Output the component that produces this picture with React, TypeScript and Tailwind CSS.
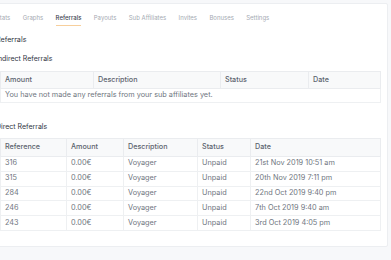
const tabs = ['Stats', 'Graphs', 'Referrals', 'Payouts', 'Sub Affiliates', 'Invites', 'Bonuses', 'Settings'];

interface Referral {
  reference: string;
  amount: string;
  description: string;
  status: string;
  date: string;
}

const direct: Referral[] = [
  { reference: '316', amount: '0.00€', description: 'Voyager', status: 'Unpaid', date: '21st Nov 2019 10:51 am' },
  { reference: '315', amount: '0.00€', description: 'Voyager', status: 'Unpaid', date: '20th Nov 2019 7:11 pm' },
  { reference: '284', amount: '0.00€', description: 'Voyager', status: 'Unpaid', date: '22nd Oct 2019 9:40 pm' },
  { reference: '246', amount: '0.00€', description: 'Voyager', status: 'Unpaid', date: '7th Oct 2019 9:40 am' },
  { reference: '243', amount: '0.00€', description: 'Voyager', status: 'Unpaid', date: '3rd Oct 2019 4:05 pm' },
];

const th = 'border border-[#eaecef] px-[4px] py-0 text-left text-[7.2px] font-medium text-[#5c636e]';
const td = 'border border-[#eef0f2] px-[4px] py-0 text-[7.3px] text-[#6f7680]';

export default function App() {
  return (
    <div className="h-[260px] w-[391px] overflow-hidden bg-[#f7f8fa] pt-[3px]" style={{ fontFamily: 'Inter, "Liberation Sans", sans-serif' }}>
      <div className="-ml-[12px] h-[244px] w-[400px] rounded-[2px] border border-[#eceef1] bg-white pl-[7px]">
        {/* tabs */}
        <div className="flex gap-[12.4px] pt-[10px] text-[6px] leading-[8px] text-[#a5aab2]">
          {tabs.map((t) => (
            <div key={t} className={t === 'Referrals' ? 'border-b-[1.5px] border-[#f7cf9c] pb-[3px] font-medium text-[#3d4350]' : 'pb-[3px]'}>
              {t}
            </div>
          ))}
        </div>

        <div className="mt-[9px] text-[7.2px] leading-[10px] text-[#2f3542]">Referrals</div>
        <div className="mt-[9px] text-[7px] leading-[10px] text-[#2f3542]">Indirect Referrals</div>

        <table className="ml-[4px] mt-[7px] w-[381px] border-collapse">
          <thead>
            <tr className="h-[17px] bg-[#f8f9fa]">
              <th className={`${th} w-[93px]`}>Amount</th>
              <th className={`${th} w-[127px]`}>Description</th>
              <th className={`${th} w-[88px]`}>Status</th>
              <th className={th}>Date</th>
            </tr>
          </thead>
          <tbody>
            <tr className="h-[14px]">
              <td colSpan={4} className={td}>You have not made any referrals from your sub affiliates yet.</td>
            </tr>
          </tbody>
        </table>

        <div className="mt-[19px] text-[7px] leading-[10px] text-[#2f3542]">Direct Referrals</div>

        <table className="ml-[4px] mt-[6px] w-[381px] border-collapse">
          <thead>
            <tr className="h-[18px] bg-[#f8f9fa]">
              <th className={`${th} w-[66px]`}>Reference</th>
              <th className={`${th} w-[57px]`}>Amount</th>
              <th className={`${th} w-[74px]`}>Description</th>
              <th className={`${th} w-[53px]`}>Status</th>
              <th className={th}>Date</th>
            </tr>
          </thead>
          <tbody>
            {direct.map((r) => (
              <tr key={r.reference} className="h-[14.8px]">
                <td className={td}>{r.reference}</td>
                <td className={td}>{r.amount}</td>
                <td className={td}>{r.description}</td>
                <td className={td}>{r.status}</td>
                <td className={td}>{r.date}</td>
              </tr>
            ))}
          </tbody>
        </table>
      </div>
    </div>
  );
}
